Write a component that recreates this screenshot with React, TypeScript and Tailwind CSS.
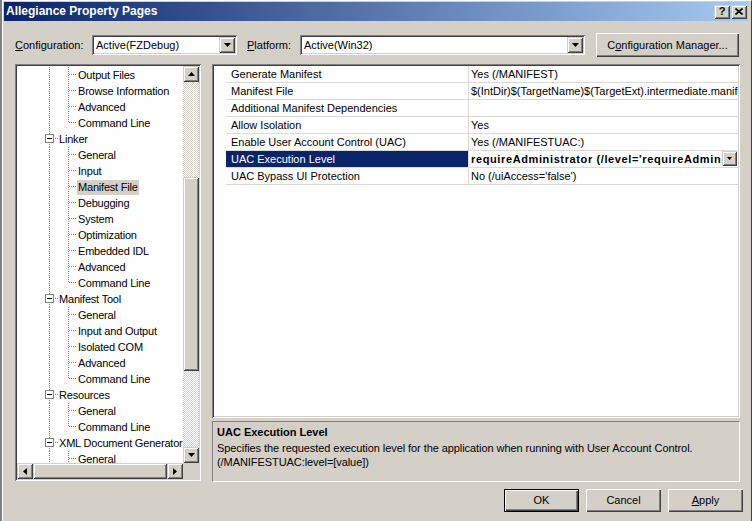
import React from "react";

// classic 3D edges
const RAISED =
  "bg-[#d4d0c8] shadow-[inset_1px_1px_0_#ffffff,inset_-1px_-1px_0_#404040,inset_-2px_-2px_0_#808080]";
const SCROLLBTN =
  "bg-[#d4d0c8] shadow-[inset_1px_1px_0_#d4d0c8,inset_-1px_-1px_0_#404040,inset_2px_2px_0_#ffffff,inset_-2px_-2px_0_#808080]";
const SUNKEN =
  "shadow-[inset_1px_1px_0_#808080,inset_-1px_-1px_0_#ffffff,inset_2px_2px_0_#404040,inset_-2px_-2px_0_#d4d0c8]";
const TRACK =
  "bg-[repeating-conic-gradient(#d4d0c8_0_25%,#ffffff_0_50%)] bg-[length:2px_2px]";

type Dir = "up" | "down" | "left" | "right";

function Arrow({ dir }: { dir: Dir }) {
  const pts = {
    down: "0,0 7,0 3.5,4",
    up: "0,4 7,4 3.5,0",
    left: "4,0 4,7 0,3.5",
    right: "0,0 0,7 4,3.5",
  }[dir];
  const horiz = dir === "up" || dir === "down";
  return (
    <svg width={horiz ? 7 : 4} height={horiz ? 4 : 7} viewBox={horiz ? "0 0 7 4" : "0 0 4 7"}>
      <polygon points={pts} fill="#000" />
    </svg>
  );
}

function Combo({ value, width }: { value: string; width: string }) {
  return (
    <div className={`${width} h-[20px] bg-white ${SUNKEN} p-[2px] flex items-stretch`}>
      <div className="flex-1 pl-[2px] leading-[16px] overflow-hidden whitespace-nowrap">{value}</div>
      <div className={`w-[16px] ${SCROLLBTN} flex items-center justify-center`}>
        <Arrow dir="down" />
      </div>
    </div>
  );
}

type TreeItem = { label: string; level: 1 | 2; last?: boolean; selected?: boolean };

const tree: TreeItem[] = [
  { label: "Output Files", level: 2 },
  { label: "Browse Information", level: 2 },
  { label: "Advanced", level: 2 },
  { label: "Command Line", level: 2, last: true },
  { label: "Linker", level: 1 },
  { label: "General", level: 2 },
  { label: "Input", level: 2 },
  { label: "Manifest File", level: 2, selected: true },
  { label: "Debugging", level: 2 },
  { label: "System", level: 2 },
  { label: "Optimization", level: 2 },
  { label: "Embedded IDL", level: 2 },
  { label: "Advanced", level: 2 },
  { label: "Command Line", level: 2, last: true },
  { label: "Manifest Tool", level: 1 },
  { label: "General", level: 2 },
  { label: "Input and Output", level: 2 },
  { label: "Isolated COM", level: 2 },
  { label: "Advanced", level: 2 },
  { label: "Command Line", level: 2, last: true },
  { label: "Resources", level: 1 },
  { label: "General", level: 2 },
  { label: "Command Line", level: 2, last: true },
  { label: "XML Document Generator", level: 1 },
  { label: "General", level: 2 },
];

const DOT = { stroke: "#808080", strokeWidth: 1, strokeDasharray: "1 1" };

function TreeRow({ item }: { item: TreeItem }) {
  return (
    <div className="flex h-[16px] items-center whitespace-nowrap">
      {item.level === 1 ? (
        <svg width="41" height="16" shapeRendering="crispEdges" className="shrink-0">
          <line x1="32.5" y1="0" x2="32.5" y2="3" {...DOT} />
          <line x1="32.5" y1="13" x2="32.5" y2="16" {...DOT} />
          <rect x="28.5" y="3.5" width="8" height="8" fill="#fff" stroke="#808080" />
          <line x1="30" y1="7.5" x2="35" y2="7.5" stroke="#000" />
          <line x1="38" y1="7.5" x2="41" y2="7.5" {...DOT} />
        </svg>
      ) : (
        <svg width="60" height="16" shapeRendering="crispEdges" className="shrink-0">
          <line x1="32.5" y1="0" x2="32.5" y2="16" {...DOT} />
          <line x1="51.5" y1="0" x2="51.5" y2={item.last ? 8 : 16} {...DOT} />
          <line x1="52" y1="7.5" x2="59" y2="7.5" {...DOT} />
        </svg>
      )}
      <span
        className={`px-[1px] leading-[15px] tracking-[-0.2px] ${item.selected ? "bg-[#d4d0c8]" : ""}`}
      >
        {item.label}
      </span>
    </div>
  );
}

function TreePanel() {
  return (
    <div className={`w-[186px] h-[417px] bg-[#d4d0c8] ${SUNKEN} p-[2px] flex flex-col`}>
      <div className="flex h-[397px]">
        <div className="w-[166px] bg-white overflow-hidden pt-[1px]">
          {tree.map((t, i) => (
            <TreeRow key={i} item={t} />
          ))}
        </div>
        <div className="w-[16px] flex flex-col">
          <div className={`h-[16px] ${SCROLLBTN} flex items-center justify-center`}>
            <Arrow dir="up" />
          </div>
          <div className={`h-[95px] ${TRACK}`} />
          <div className={`h-[194px] ${SCROLLBTN}`} />
          <div className={`flex-1 ${TRACK}`} />
          <div className={`h-[16px] ${SCROLLBTN} flex items-center justify-center`}>
            <Arrow dir="down" />
          </div>
        </div>
      </div>
      <div className="flex h-[16px]">
        <div className={`w-[16px] ${SCROLLBTN} flex items-center justify-center`}>
          <Arrow dir="left" />
        </div>
        <div className={`flex-1 ${SCROLLBTN}`} />
        <div className={`w-[16px] ${SCROLLBTN} flex items-center justify-center`}>
          <Arrow dir="right" />
        </div>
        <div className="w-[16px] bg-[#d4d0c8]" />
      </div>
    </div>
  );
}

const props: [string, string][] = [
  ["Generate Manifest", "Yes (/MANIFEST)"],
  ["Manifest File", "$(IntDir)$(TargetName)$(TargetExt).intermediate.manifest"],
  ["Additional Manifest Dependencies", ""],
  ["Allow Isolation", "Yes"],
  ["Enable User Account Control (UAC)", "Yes (/MANIFESTUAC:)"],
  ["UAC Execution Level", "requireAdministrator (/level='requireAdministrator')"],
  ["UAC Bypass UI Protection", "No (/uiAccess='false')"],
];

function PropertyGrid() {
  return (
    <div className={`h-[354px] bg-white ${SUNKEN} p-[2px]`}>
      <div className="flex flex-col">
        {props.map(([name, value], i) => {
          const sel = i === 5;
          return (
            <div key={i} className="flex h-[17px]">
              <div className="w-[12px]" />
              <div
                className={`w-[242px] border-b border-[#dcdad4] pl-[5px] leading-[16px] whitespace-nowrap overflow-hidden ${
                  sel ? "bg-[#0a246a] text-white" : ""
                }`}
              >
                {name}
              </div>
              <div className="flex-1 min-w-0 flex border-b border-l border-[#dcdad4]">
                <div
                  className={`flex-1 min-w-0 pl-[2px] leading-[16px] whitespace-nowrap overflow-hidden ${
                    sel ? "font-bold tracking-[0.62px]" : ""
                  }`}
                >
                  {value}
                </div>
                {sel && (
                  <div
                    className={`w-[15px] h-[15px] mr-[1px] shrink-0 ${SCROLLBTN} flex items-center justify-center`}
                  >
                    <svg width="5" height="3" viewBox="0 0 5 3">
                      <polygon points="0,0 5,0 2.5,3" fill="#000" />
                    </svg>
                  </div>
                )}
              </div>
            </div>
          );
        })}
      </div>
    </div>
  );
}

function Button({ children, isDefault }: { children: React.ReactNode; isDefault?: boolean }) {
  return (
    <div
      className={`w-[75px] h-[23px] flex items-center justify-center ${
        isDefault
          ? "bg-[#d4d0c8] shadow-[inset_0_0_0_1px_#000000,inset_2px_2px_0_#ffffff,inset_-2px_-2px_0_#404040,inset_-3px_-3px_0_#808080]"
          : RAISED
      }`}
    >
      {children}
    </div>
  );
}

export default function App() {
  return (
    <div className="w-[752px] h-[521px] overflow-hidden bg-[#d4d0c8] flex font-['Liberation_Sans',Arial,sans-serif] text-[11px] text-black">
      <div className="w-[2px] bg-[#808080]" />
      <div className="flex-1 flex flex-col border-l border-t border-r border-white border-r-[#404040]">
        {/* TITLE BAR */}
        <div className="mt-[1px] ml-[1px] mr-[3px] h-[19px] bg-[linear-gradient(to_right,#0a246a,#a6caf0)] flex items-center pl-[2px] pr-[1px]">
          <span className="flex-1 text-white font-bold text-[12px] leading-[19px]">
            Allegiance Property Pages
          </span>
          <div className="flex gap-[1px]">
            <div className={`w-[16px] h-[14px] ${SCROLLBTN} flex items-center justify-center font-bold text-[11px] leading-none`}>
              ?
            </div>
            <div className={`w-[16px] h-[14px] ${SCROLLBTN} flex items-center justify-center`}>
              <svg width="8" height="7" viewBox="0 0 8 7">
                <path d="M0.5 0.5L7.5 6.5M7.5 0.5L0.5 6.5" stroke="#000" strokeWidth="1.6" />
              </svg>
            </div>
          </div>
        </div>

        {/* BODY */}
        <div className="pl-[12px] w-[740px]">
          {/* CONFIG ROW */}
          <div className="mt-[12px] h-[24px] flex items-center">
            <div className="w-[77px]">
              <span className="underline">C</span>onfiguration:
            </div>
            <Combo value="Active(FZDebug)" width="w-[145px]" />
            <div className="ml-[10px] w-[53px]">
              <span className="underline">P</span>latform:
            </div>
            <Combo value="Active(Win32)" width="w-[285px]" />
            <div className={`ml-[11px] w-[143px] h-[24px] ${RAISED} flex items-center justify-center`}>
              C<span className="underline">o</span>nfiguration Manager...
            </div>
          </div>

          {/* MAIN */}
          <div className="mt-[7px] h-[418px] flex">
            <TreePanel />
            <div className="ml-[11px] w-[528px] flex flex-col">
              <PropertyGrid />
              <div className="mt-[3px] h-[61px] border border-t-[#808080] border-l-[#808080] border-b-white border-r-white px-[4px] pt-[2px]">
                <div className="font-bold leading-[16px]">UAC Execution Level</div>
                <div className="mt-[1px] leading-[14px] tracking-[-0.07px]">
                  Specifies the requested execution level for the application when running with User Account Control.
                  <br />
                  (/MANIFESTUAC:level=[value])
                </div>
              </div>
            </div>
          </div>

          {/* BUTTONS */}
          <div className="mt-[7px] flex justify-end gap-[7px] w-[728px]">
            <Button isDefault>OK</Button>
            <Button>Cancel</Button>
            <Button>
              <span className="underline">A</span>pply
            </Button>
          </div>
        </div>
      </div>
    </div>
  );
}
